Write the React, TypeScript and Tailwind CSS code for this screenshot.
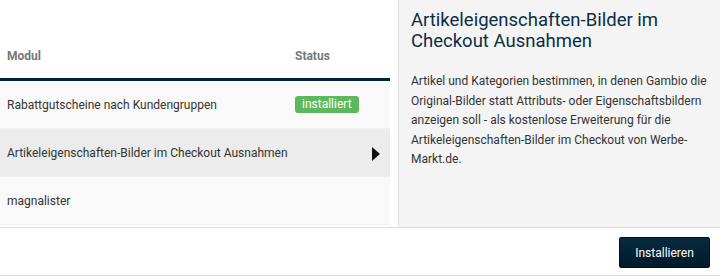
import React from 'react';

const rows = [
  { name: 'Rabattgutscheine nach Kundengruppen', installed: true, active: false },
  { name: 'Artikeleigenschaften-Bilder im Checkout Ausnahmen', installed: false, active: true },
  { name: 'magnalister', installed: false, active: false },
];

export default function App() {
  return (
    <div className="w-[720px] h-[276px] bg-white font-['Roboto',sans-serif] text-[#333] overflow-hidden">
      <div className="flex h-[227px]">
        {/* Module table */}
        <div className="w-[390px] flex flex-col">
          <div className="h-[78px] flex items-end pb-[13px] text-[12px] font-bold text-[#777]">
            <div className="pl-[7px] w-[295px]">Modul</div>
            <div>Status</div>
          </div>
          <div className="border-t-[3px] border-[#002337]">
            {rows.map((row) => (
              <div
                key={row.name}
                className={`h-[48px] flex items-center text-[12px] border-b border-[#f0f0f0] ${
                  row.active ? 'bg-[#ececec]' : 'bg-[#f9f9f9]'
                }`}
              >
                <div className="pl-[7px] w-[295px]">{row.name}</div>
                <div className="flex-1 flex items-center">
                  {row.installed && (
                    <span className="bg-[#5cb85c] text-white text-[12px] leading-[17px] px-[7px] rounded-[3px]">
                      installiert
                    </span>
                  )}
                  {row.active && (
                    <svg width="10" height="14" viewBox="0 0 10 14" className="ml-[76px] mt-[2px]">
                      <polygon points="1,0 9,7 1,14" fill="#111" />
                    </svg>
                  )}
                </div>
              </div>
            ))}
          </div>
        </div>

        <div className="w-[8px]" />

        {/* Details */}
        <div className="flex-1 bg-[#f4f4f4] border-l border-[#e2e2e2] pl-[12px] pr-[6px] pt-[10px]">
          <h2 className="text-[18.5px] leading-[21px] text-[#0b2e46]">
            Artikeleigenschaften-Bilder im Checkout Ausnahmen
          </h2>
          <p className="mt-[20px] text-[12px] leading-[19.5px] text-[#333]">
            Artikel und Kategorien bestimmen, in denen Gambio die Original-Bilder statt Attributs- oder
            Eigenschaftsbildern anzeigen soll - als kostenlose Erweiterung für die Artikeleigenschaften-Bilder
            im Checkout von Werbe-Markt.de.
          </p>
        </div>
      </div>

      {/* Footer */}
      <div className="h-[49px] border-t border-b border-[#dedede] flex items-center justify-end pr-[10px] pt-[2px]">
        <button className="h-[31px] w-[91px] rounded-[2px] bg-gradient-to-b from-[#0a2a3f] to-[#001a2a] text-white text-[12px] border border-[#00131f]">
          Installieren
        </button>
      </div>
    </div>
  );
}
